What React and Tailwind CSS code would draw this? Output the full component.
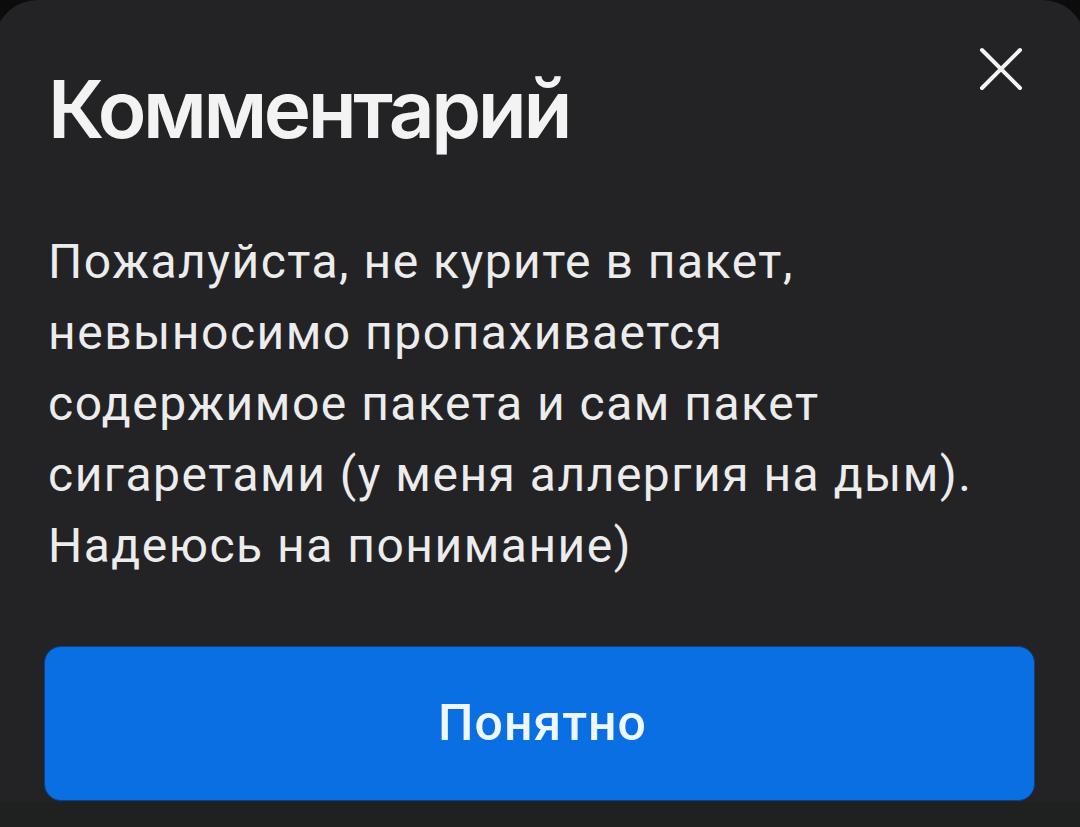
import React from 'react';

const LINES = [
  'Пожалуйста, не курите в пакет,',
  'невыносимо пропахивается',
  'содержимое пакета и сам пакет',
  'сигаретами (у меня аллергия на дым).',
  'Надеюсь на понимание)',
];

export default function App() {
  return (
    <div className="flex h-[827px] w-[1080px] flex-col overflow-hidden bg-[#0c0c0d]">
      <div className="relative -mx-[6px] flex h-[802px] flex-col rounded-t-[44px] bg-[#232325] pl-[54px] pr-[51px]">
        <button
          type="button"
          aria-label="Закрыть"
          className="absolute right-[62px] top-[46px] text-[#f4f4f4]"
        >
          <svg width="46" height="46" viewBox="0 0 46 46" fill="none">
            <path d="M4 4L42 42M42 4L4 42" stroke="currentColor" strokeWidth="4" strokeLinecap="round" />
          </svg>
        </button>

        <h1 className="mt-[64px] font-['Inter',sans-serif] text-[80px] font-semibold leading-[90px] tracking-[-3.4px] text-[#f3f3f3]">
          Комментарий
        </h1>

        <p className="mt-[72px] font-['Roboto',sans-serif] text-[48px] leading-[71px] tracking-[1.5px] text-[#ececec]">
          {LINES.map((line) => (
            <span key={line} className="block whitespace-nowrap">
              {line}
            </span>
          ))}
        </p>

        <button
          type="button"
          className="mt-auto mb-px -ml-[4px] flex h-[155px] w-[991px] items-center justify-center rounded-[17px] border border-[#0b3f86] bg-[#0a6fe2] pl-[6px] font-['Roboto',sans-serif] text-[50px] font-medium tracking-[1px] text-[#eef7ff]"
        >
          Понятно
        </button>
      </div>
      <div className="h-[25px] bg-[#1f2020]" />
    </div>
  );
}
